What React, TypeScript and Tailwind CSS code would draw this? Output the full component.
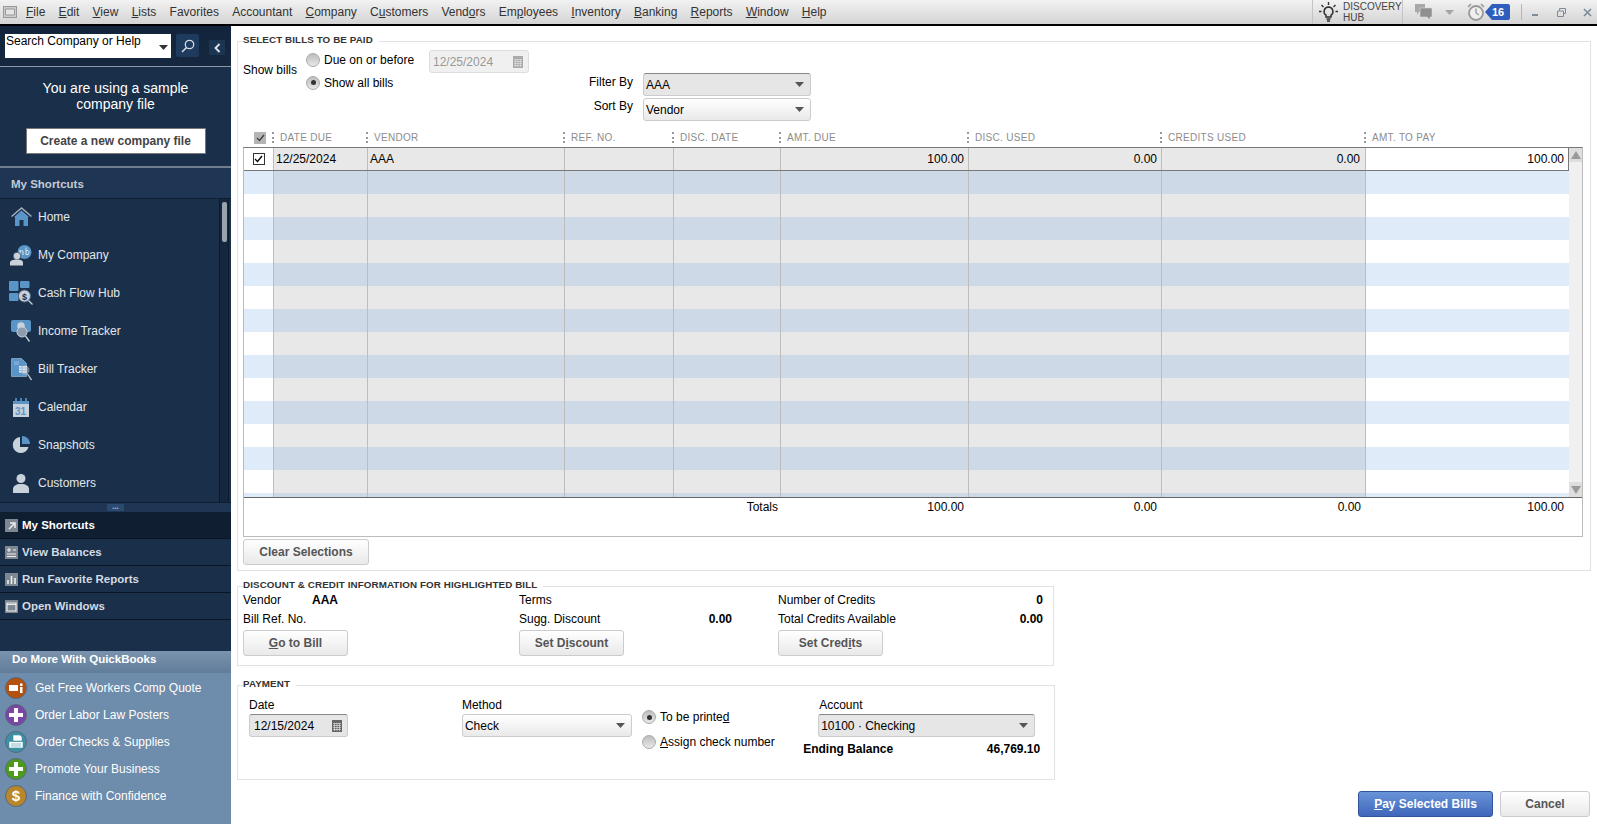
import React from 'react';

const gridCols = 'grid grid-cols-[30px_94px_197px_109px_107px_188px_193px_204px_203px]';

const columns = ['DATE DUE', 'VENDOR', 'REF. NO.', 'DISC. DATE', 'AMT. DUE', 'DISC. USED', 'CREDITS USED', 'AMT. TO PAY'];

function Caret({ className = '' }: { className?: string }) {
  return (
    <svg width="9" height="5" viewBox="0 0 9 5" className={className}>
      <path d="M0 0h9L4.500 5z" fill="currentColor" />
    </svg>
  );
}

function CalendarIcon({ color = '#777' }: { color?: string }) {
  return (
    <svg width="10" height="12" viewBox="0 0 10 12">
      <rect width="10" height="12" fill={color} />
      <path d="M1 3.500h8M1 5.500h8M1 7.500h8M1 9.500h8M2.500 3v8M5 3v8M7.500 3v8" stroke="#ddd" strokeWidth="0.7" />
    </svg>
  );
}

function Radio({ checked = false }: { checked?: boolean }) {
  return (
    <span className="flex h-[14px] w-[14px] shrink-0 items-center justify-center rounded-full border border-[#aaa] bg-gradient-to-b from-[#bdbdbd] to-[#e8e8e8]">
      {checked && <span className="h-[5px] w-[5px] rounded-full bg-[#333]" />}
    </span>
  );
}

function Btn({ children, className = '' }: { children: React.ReactNode; className?: string }) {
  return (
    <button className={`flex h-[26px] items-center justify-center rounded-[3px] border border-[#ccc] bg-gradient-to-b from-white to-[#e9e9e9] text-[12px] font-bold text-[#555] ${className}`}>
      {children}
    </button>
  );
}

function Combo({ value, dark = false, className = '' }: { value: string; dark?: boolean; className?: string }) {
  return (
    <div
      className={`flex h-[23px] items-center justify-between rounded-[3px] border border-[#ccc] pl-[2px] pr-[6px] text-[12px] text-black ${
        dark ? 'border-t-[#888] bg-[#e6e6e6]' : 'bg-gradient-to-b from-white to-[#e9e9e9]'
      } ${className}`}
    >
      <span>{value}</span>
      <Caret className="text-[#555]" />
    </div>
  );
}

function Section({ title, className = '', children }: { title: string; className?: string; children: React.ReactNode }) {
  return (
    <div className={`relative border border-[#e2e2e2] ${className}`}>
      <span className="absolute -top-[8px] left-[5px] bg-white pr-[6px] text-[9.800px] leading-[12px] font-bold tracking-[0.1px] text-[#333]">
        {title}
      </span>
      {children}
    </div>
  );
}

const iconBase = '#5b94c6';
const iconLight = '#c9d1da';

const navItems: { label: string; icon: React.ReactNode }[] = [
  {
    label: 'Home',
    icon: (
      <svg width="21" height="20" viewBox="0 0 21 20">
        <path d="M.500 9.500 10.500 1l10 8.500" fill="none" stroke="#a3b0bd" strokeWidth="1.500" />
        <path d="M3 10 10.500 3.500 18 10h-1v9h-4.500v-6h-4v6H4v-9z" fill={iconBase} />
      </svg>
    ),
  },
  {
    label: 'My Company',
    icon: (
      <svg width="22" height="21" viewBox="0 0 22 21">
        <circle cx="14.500" cy="7" r="7" fill={iconBase} />
        <path d="M10 5v5M10 6.500q3-2 3 0.500V10M16 2.500V9.500q3 1 3-2t-3-1.500" stroke="#dbe6f0" strokeWidth="1" fill="none" />
        <circle cx="7" cy="11" r="3.800" fill={iconLight} stroke="#1a2f4a" strokeWidth="0.600" />
        <path d="M0 20.500v-3C0 15.500 3 14.500 7 14.500s6 1 6 3v3z" fill={iconLight} />
      </svg>
    ),
  },
  {
    label: 'Cash Flow Hub',
    icon: (
      <svg width="24" height="24" viewBox="0 0 24 24">
        <rect x="0" y="0" width="9.500" height="10" rx="1" fill={iconBase} />
        <rect x="11" y="0" width="9.500" height="7" rx="1" fill={iconBase} />
        <rect x="0" y="12" width="9.500" height="8" rx="1" fill={iconBase} />
        <circle cx="15.500" cy="15" r="6" fill={iconLight} stroke="#4d6781" strokeWidth="1" />
        <text x="13" y="18.500" fontSize="9" fontWeight="700" fill="#1a2f4a" fontFamily="Liberation Sans, sans-serif">$</text>
        <path d="m19.500 19.500 4 4" stroke={iconLight} strokeWidth="1.300" />
      </svg>
    ),
  },
  {
    label: 'Income Tracker',
    icon: (
      <svg width="20" height="22" viewBox="0 0 20 22">
        <path d="M2 0h16a2 2 0 0 1 2 2v8a2 2 0 0 1-2 2H2a2 2 0 0 1-2-2V2a2 2 0 0 1 2-2z" fill={iconBase} />
        <circle cx="10" cy="6" r="3.800" fill={iconLight} />
        <circle cx="11" cy="12" r="5" fill="#8d9dad" stroke={iconLight} strokeWidth="1" />
        <path d="m14.500 16 4 5.500" stroke={iconLight} strokeWidth="1.300" />
      </svg>
    ),
  },
  {
    label: 'Bill Tracker',
    icon: (
      <svg width="21" height="23" viewBox="0 0 21 23">
        <path d="M.500.500h10l5 5v13H.500z" fill={iconBase} stroke="#a9c7e0" strokeWidth="0.600" />
        <path d="M3 4h5M3 6h5" stroke="#a9c7e0" strokeWidth="0.800" />
        <rect x="8" y="8" width="8" height="6.500" fill="#e5edf4" />
        <path d="M8 10h8M8 12.500h8M11 8v6.500" stroke={iconBase} strokeWidth="0.700" />
        <circle cx="14" cy="12" r="4.500" fill="#c9d1da" fillOpacity="0.500" />
        <path d="m16.500 16 4 6" stroke={iconLight} strokeWidth="1.300" />
      </svg>
    ),
  },
  {
    label: 'Calendar',
    icon: (
      <svg width="16" height="19" viewBox="0 0 16 19">
        <rect x="0" y="3" width="16" height="16" fill={iconLight} />
        <rect x="0" y="3" width="16" height="3" fill={iconBase} />
        <path d="M3 0v5M8 0v5M13 0v5" stroke={iconBase} strokeWidth="1.600" />
        <text x="2" y="17" fontSize="10" fontWeight="700" fill={iconBase} fontFamily="Liberation Sans, sans-serif">31</text>
      </svg>
    ),
  },
  {
    label: 'Snapshots',
    icon: (
      <svg width="18" height="18" viewBox="0 0 18 18">
        <path d="M8 1a8 8 0 1 0 8.500 10H8z" fill={iconLight} />
        <path d="M10 0a8 8 0 0 1 8 8h-8z" fill={iconBase} />
      </svg>
    ),
  },
  {
    label: 'Customers',
    icon: (
      <svg width="16" height="19" viewBox="0 0 16 19">
        <circle cx="8" cy="4.500" r="4.500" fill={iconLight} />
        <path d="M0 19v-4c0-3 3-5 8-5s8 2 8 5v4z" fill={iconLight} />
      </svg>
    ),
  },
];

const groupIcons: Record<string, React.ReactNode> = {
  'My Shortcuts': <path d="M4 10 9 5M5 4h5v5" stroke="#eee" strokeWidth="1.500" fill="none" />,
  'View Balances': <path d="M2 4h4M4 2v4M8 4h3M2 8h9M2 10.500h9" stroke="#eee" strokeWidth="1.100" fill="none" />,
  'Run Favorite Reports': <path d="M3 11V7M6.500 11V3M10 11V5" stroke="#eee" strokeWidth="1.600" fill="none" />,
  'Open Windows': <path d="M2 3h9v8H2zM2 4.500h9" stroke="#eee" strokeWidth="1.200" fill="none" />,
};

const promos = [
  {
    label: 'Get Free Workers Comp Quote',
    bg: 'bg-[#b5500f]',
    icon: <path d="M4 8h9v6H4zM15 6.500h2.500V9H15zM15 10h2.500v6H15z" fill="#fff" />,
  },
  { label: 'Order Labor Law Posters', bg: 'bg-[#7a45a3]', icon: <path d="M9 4h4v5h5v4h-5v5H9v-5H4V9h5z" fill="#fff" /> },
  {
    label: 'Order Checks & Supplies',
    bg: 'bg-[#3d8fa3]',
    icon: <path d="M8 4h7l2 2v4H8zM4 10.500h14V17H4zM6 13h10M6 15h10" fill="#fff" stroke="#3d8fa3" strokeWidth="0.600" />,
  },
  { label: 'Promote Your Business', bg: 'bg-[#4f9a1b]', icon: <path d="M9 4h4v5h5v4h-5v5H9v-5H4V9h5z" fill="#fff" /> },
  { label: 'Finance with Confidence', bg: 'bg-[#b8862b]', icon: null },
];

function MenuBar() {
  return (
    <div className="flex h-[26px] shrink-0 items-center border-b-2 border-black bg-gradient-to-b from-[#f2f2f2] to-[#d4d4d4] text-[12px] text-[#333]">
      <svg width="14" height="12" viewBox="0 0 14 12" className="mr-[9px] ml-[3px]">
        <rect x="0.500" y="0.500" width="13" height="11" fill="#ccc" stroke="#999" />
        <path d="M2.500 3h9v6h-9z" fill="#e5e5e5" stroke="#999" />
      </svg>
      <nav className="flex gap-[13.250px]">
        <span><u>F</u>ile</span>
        <span><u>E</u>dit</span>
        <span><u>V</u>iew</span>
        <span><u>L</u>ists</span>
        <span>Favorites</span>
        <span>Accountant</span>
        <span><u>C</u>ompany</span>
        <span>C<u>u</u>stomers</span>
        <span>Vend<u>o</u>rs</span>
        <span>Em<u>p</u>loyees</span>
        <span><u>I</u>nventory</span>
        <span><u>B</u>anking</span>
        <span><u>R</u>eports</span>
        <span><u>W</u>indow</span>
        <span><u>H</u>elp</span>
      </nav>
      <div className="ml-auto flex h-full items-center">
        <div className="flex h-full w-[91px] items-center border-x border-[#c4c4c4] pl-[6px]">
          <svg width="19" height="20" viewBox="0 0 19 20" className="shrink-0">
            <path d="M9.500 5a4.500 4.500 0 0 0-2.500 8.200V15h5v-1.800A4.500 4.500 0 0 0 9.500 5z" fill="none" stroke="#333" strokeWidth="1.500" />
            <path d="M7.500 17h4M8 19h3M9.500 0v3M2.500 3l2 2M16.500 3l-2 2M0 9.500h2.500M19 9.500h-2.500" stroke="#333" strokeWidth="1.400" />
          </svg>
          <div className="ml-[5px] text-[10px] leading-[11px] text-[#444]">
            DISCOVERY
            <br />
            HUB
          </div>
        </div>
        <svg width="17" height="16" viewBox="0 0 17 16" className="ml-[12px]">
          <path d="M0 0h10v8H4l-2 3V8H0z" fill="#a8a8a8" />
          <path d="M5 4h12v9h-2v3l-3-3H5z" fill="#8f8f8f" stroke="#ddd" strokeWidth="0.600" />
        </svg>
        <Caret className="ml-[13px] text-[#a5a5a5]" />
        <svg width="18" height="18" viewBox="0 0 18 18" className="ml-[13px]">
          <circle cx="9" cy="10" r="7" fill="#eee" stroke="#999" strokeWidth="1.800" />
          <path d="M9 5.500V10l3 2" stroke="#999" strokeWidth="1.300" fill="none" />
          <path d="M1 4 4 1M17 4l-3-3" stroke="#999" strokeWidth="1.600" />
        </svg>
        <div className="flex items-center">
          <span className="h-0 w-0 border-y-[8px] border-r-[7px] border-y-transparent border-r-[#2f5dbd]" />
          <span className="flex h-[16px] w-[18px] items-center rounded-r-[2px] bg-[#2f5dbd] text-[11px] font-bold text-white">16</span>
        </div>
        <span className="ml-[11px] h-[16px] w-px bg-[#b5b5b5]" />
        <span className="ml-[10px] mt-[6px] h-[2px] w-[6px] bg-[#7c8a99]" />
        <svg width="9" height="9" viewBox="0 0 9 9" className="ml-[19px]">
          <path d="M2.500 2.500v-2h6v5h-2M.5 3h6v5.500h-6z" fill="none" stroke="#7c8a99" strokeWidth="1" />
        </svg>
        <svg width="9" height="9" viewBox="0 0 9 9" className="ml-[17px] mr-[5px]">
          <path d="m1 1 7 7M8 1 1 8" stroke="#7c8a99" strokeWidth="1.600" />
        </svg>
      </div>
    </div>
  );
}

function Sidebar() {
  return (
    <aside className="flex h-full w-[231px] shrink-0 flex-col bg-[#1a2f4a] text-[#e3e7ec]">
      <div className="flex h-[41px] shrink-0 items-start border-b border-[#8d98a5] bg-gradient-to-b from-[#12243b] to-[#15283f] pt-[8px] pl-[5px]">
        <div className="flex h-[24px] w-[166px] justify-between bg-white pl-px pr-[3px] text-[12px] leading-[15px] text-black">
          <span>Search Company or Help</span>
          <Caret className="mt-[11px] text-[#333]" />
        </div>
        <div className="ml-[5px] flex h-[23px] w-[23px] items-center justify-center rounded-[2px] bg-[#1e3a5c]">
          <svg width="14" height="14" viewBox="0 0 14 14">
            <circle cx="8.500" cy="5.500" r="4.200" fill="none" stroke="#d5dbe2" strokeWidth="1.300" />
            <path d="M5.500 8.500 1 13" stroke="#d5dbe2" strokeWidth="1.600" />
          </svg>
        </div>
        <div className="mt-[6px] ml-[10px] flex h-[15px] w-[16px] items-center justify-center bg-[#1c3553]">
          <svg width="7" height="10" viewBox="0 0 7 10">
            <path d="M5.500 1 1.500 5l4 4" fill="none" stroke="#e4e8ec" strokeWidth="1.800" />
          </svg>
        </div>
      </div>
      <div className="flex h-[101px] shrink-0 flex-col items-center border-b-2 border-[#6f7d8d] pt-[13px]">
        <p className="text-center text-[14px] leading-[16px] text-white">
          You are using a sample
          <br />
          company file
        </p>
        <button className="mt-[16px] h-[26px] w-[180px] border border-[#777] bg-white text-[12px] font-bold text-[#444]">
          Create a new company file
        </button>
      </div>
      <div className="flex h-[31px] shrink-0 items-center border-b border-[#0e1d2f] bg-[#1e3554] pt-[3px] pl-[11px] text-[11.500px] font-bold text-[#c3cbd4]">
        My Shortcuts
      </div>
      <div className="flex h-[303px] shrink-0 overflow-hidden">
        <ul className="-mt-px flex-1">
          {navItems.map((item) => (
            <li key={item.label} className="flex h-[38px] items-center text-[12px]">
              <span className="flex w-[38px] shrink-0 items-center justify-center pl-[4px]">{item.icon}</span>
              {item.label}
            </li>
          ))}
        </ul>
        <div className="mr-[2px] w-[10px] border-x border-[#0c1a2a] bg-[#14273e] pt-[3px]">
          <div className="mx-auto h-[40px] w-[5px] rounded-[2px] bg-[#9aa3ad]" />
        </div>
      </div>
      <div className="flex h-[10px] shrink-0 items-center justify-center border-t border-[#0e1d2f] bg-[#1e3554]">
        <span className="flex h-[7px] w-[17px] items-center justify-center bg-[#2a4a70] text-[6px] leading-none text-[#9fb0c2]">•••</span>
      </div>
      <div className="shrink-0">
        {Object.keys(groupIcons).map((g, i) => (
          <div
            key={g}
            className={`flex h-[27px] items-center gap-[4px] border-b border-[#0a1625] pt-px pl-[5px] text-[11.500px] font-bold ${
              i === 0 ? 'bg-[#0f1e30] text-white' : 'text-[#d5dbe2]'
            }`}
          >
            <svg width="13" height="13" viewBox="0 0 13 13">
              <rect width="13" height="13" fill="#7d8791" />
              {groupIcons[g]}
            </svg>
            {g}
          </div>
        ))}
      </div>
      <div className="flex-1" />
      <div className="h-[173px] shrink-0 bg-[#6e8cab]">
        <div className="h-[22px] bg-gradient-to-b from-[#7a93ae] to-[#627d9a] pl-[12px] pt-[1px] text-[11.500px] leading-[14px] font-bold text-white">
          Do More With QuickBooks
        </div>
        <ul className="pt-[1px]">
          {promos.map((p) => (
            <li key={p.label} className="flex h-[27px] items-center text-[12px] text-white">
              <span className={`ml-[5px] flex h-[22px] w-[22px] shrink-0 items-center justify-center rounded-full border border-[#56697d] ${p.bg}`}>
                {p.icon ? (
                  <svg width="22" height="22" viewBox="0 0 22 22" className="shrink-0">{p.icon}</svg>
                ) : (
                  <span className="text-[15px] leading-none font-bold">$</span>
                )}
              </span>
              <span className="ml-[8px]">{p.label}</span>
            </li>
          ))}
        </ul>
      </div>
    </aside>
  );
}

function BillsTable() {
  const rows = Array.from({ length: 15 }, (_, i) => i);
  const cell = 'border-r border-[#bdbdbd] h-full';
  return (
    <div className="ml-[5px] mr-[7px] flex h-[390px] flex-col border border-[#bbb] border-t-[#777]">
      <div className="flex h-[349px] overflow-hidden">
        <div className="w-[1325px] shrink-0">
          <div className={`${gridCols} h-[23px] border-b border-[#777] bg-[#e8e8e8] text-[12px] leading-[22px] text-black`}>
            <div className="flex items-center justify-center border-r border-[#bdbdbd] bg-white">
              <span className="flex h-[12px] w-[12px] items-center justify-center border border-[#333] bg-white">
                <svg width="9" height="8" viewBox="0 0 9 8"><path d="m1 4 2.500 2.500L8 1" fill="none" stroke="#000" strokeWidth="1.300" /></svg>
              </span>
            </div>
            <div className={`${cell} pl-[2px]`}>12/25/2024</div>
            <div className={`${cell} pl-[2px]`}>AAA</div>
            <div className={cell} />
            <div className={cell} />
            <div className={`${cell} pr-[4px] text-right`}>100.00</div>
            <div className={`${cell} pr-[4px] text-right`}>0.00</div>
            <div className={`${cell} pr-[5px] text-right`}>0.00</div>
            <div className="border-r border-[#777] bg-white pr-[4px] text-right">100.00</div>
          </div>
          {rows.map((r) => {
            const even = r % 2 === 0;
            const mid = even ? 'bg-[#ced9e7]' : 'bg-[#e8e8e8]';
            const edge = even ? 'bg-[#e0ebfa]' : 'bg-white';
            return (
              <div key={r} className={`${gridCols} h-[23px]`}>
                <div className={`${cell} ${edge}`} />
                <div className={`${cell} ${mid}`} />
                <div className={`${cell} ${mid}`} />
                <div className={`${cell} ${mid}`} />
                <div className={`${cell} ${mid}`} />
                <div className={`${cell} ${mid}`} />
                <div className={`${cell} ${mid}`} />
                <div className={`${cell} ${mid}`} />
                <div className={edge} />
              </div>
            );
          })}
        </div>
        <div className="flex flex-1 flex-col justify-between bg-[#f0f0f0]">
          <div className="flex h-[14px] items-center justify-center bg-[#dedede]">
            <svg width="10" height="8" viewBox="0 0 10 8"><path d="M5 0l5 8H0z" fill="#9a9a9a" /></svg>
          </div>
          <div className="flex h-[15px] items-center justify-center bg-[#dedede]">
            <svg width="10" height="8" viewBox="0 0 10 8"><path d="M0 0h10L5 8z" fill="#9a9a9a" /></svg>
          </div>
        </div>
      </div>
      <div className={`${gridCols} flex-1 border-t border-[#666] pt-px text-[12px] leading-[16px] text-black`}>
        <div className="col-span-5 pr-[3px] text-right">Totals</div>
        <div className="pr-[5px] text-right">100.00</div>
        <div className="pr-[5px] text-right">0.00</div>
        <div className="pr-[5px] text-right">0.00</div>
        <div className="pr-[5px] text-right">100.00</div>
      </div>
    </div>
  );
}

function SelectBills() {
  return (
    <Section title="SELECT BILLS TO BE PAID" className="ml-[6px] h-[530px] w-[1354px]">
      <div className="flex h-[87px] pl-[5px] text-[12px] text-black">
        <div className="w-[63px] pt-[21px] leading-[14px]">Show bills</div>
        <div className="w-[123px] pt-[6px]">
          <label className="flex h-[23px] items-center gap-[4px]">
            <Radio />
            <span>Due on or before</span>
          </label>
          <label className="flex h-[23px] items-center gap-[4px]">
            <Radio checked />
            <span>Show all bills</span>
          </label>
        </div>
        <div className="mt-[8px] flex h-[23px] w-[100px] items-center justify-between rounded-[3px] border border-[#ddd] bg-[#f0f0f0] pr-[5px] pl-[3px] text-[#999]">
          12/25/2024
          <CalendarIcon color="#aaa" />
        </div>
        <div className="mt-[31px] ml-[45px]">
          <div className="flex h-[25px] items-start gap-[10px]">
            <span className="w-[59px] pt-px text-right leading-[17px]">Filter By</span>
            <Combo value="AAA" dark className="w-[168px]" />
          </div>
          <div className="flex items-start gap-[10px]">
            <span className="w-[59px] text-right leading-[17px]">Sort By</span>
            <Combo value="Vendor" className="w-[168px]" />
          </div>
        </div>
      </div>
      <div className={`${gridCols} h-[18px] items-start pl-[5px] text-[10px] leading-[17px] tracking-[0.3px] text-[#8c8c8c]`}>
        <div className="flex h-[17px] items-center justify-end pr-[7px]">
          <span className="flex h-[12px] w-[12px] items-center justify-center bg-[#b5b5b5]">
            <svg width="9" height="8" viewBox="0 0 9 8"><path d="m1 4 2.500 2.500L8 1" fill="none" stroke="#444" strokeWidth="1.500" /></svg>
          </span>
        </div>
        {columns.map((c) => (
          <div key={c} className="flex h-[17px] items-center">
            <span className="mr-[6px] -ml-px h-[11px] border-l-2 border-dotted border-[#999]" />
            {c}
          </div>
        ))}
      </div>
      <BillsTable />
      <Btn className="mt-[2px] ml-[5px] w-[126px]">Clear Selections</Btn>
    </Section>
  );
}

function DiscountInfo() {
  return (
    <Section title="DISCOUNT & CREDIT INFORMATION FOR HIGHLIGHTED BILL" className="mt-[15px] ml-[6px] h-[80px] w-[817px]">
      <div className="grid grid-cols-[276px_259px_1fr] pt-[5px] pl-[5px] text-[12px] leading-[16px] text-black">
        <div>
          <div className="flex h-[19px]">
            <span className="w-[69px]">Vendor</span>
            <span className="font-bold">AAA</span>
          </div>
          <div className="h-[19px]">Bill Ref. No.</div>
          <Btn className="w-[105px]"><u>G</u>o to Bill</Btn>
        </div>
        <div>
          <div className="h-[19px]">Terms</div>
          <div className="flex h-[19px] w-[213px] justify-between">
            <span>Sugg. Discount</span>
            <span className="font-bold">0.00</span>
          </div>
          <Btn className="w-[105px]">Set D<u>i</u>scount</Btn>
        </div>
        <div>
          <div className="flex h-[19px] w-[265px] justify-between">
            <span>Number of Credits</span>
            <span className="font-bold">0</span>
          </div>
          <div className="flex h-[19px] w-[265px] justify-between">
            <span>Total Credits Available</span>
            <span className="font-bold">0.00</span>
          </div>
          <Btn className="w-[105px]">Set Cred<u>i</u>ts</Btn>
        </div>
      </div>
    </Section>
  );
}

function Payment() {
  return (
    <Section title="PAYMENT" className="mt-[19px] ml-[6px] h-[95px] w-[818px]">
      <div className="flex pt-[11px] pl-[11px] text-[12px] leading-[16px] text-black">
        <div className="w-[214px]">
          <div className="h-[17px]">Date</div>
          <div className="flex h-[23px] w-[99px] items-center justify-between rounded-[3px] border border-[#ccc] border-t-[#888] bg-[#e6e6e6] pr-[5px] pl-[4px]">
            12/15/2024
            <CalendarIcon color="#666" />
          </div>
        </div>
        <div className="w-[181px]">
          <div className="h-[17px]">Method</div>
          <Combo value="Check" className="w-[170px]" />
        </div>
        <div className="w-[177px] pt-[8px]">
          <label className="flex h-[24px] items-center gap-[4px]">
            <Radio checked />
            <span>To be printe<u>d</u></span>
          </label>
          <label className="flex h-[25px] items-center gap-[4px]">
            <Radio />
            <span><u>A</u>ssign check number</span>
          </label>
        </div>
        <div className="w-[237px]">
          <div className="h-[17px] pl-[1px]">Account</div>
          <Combo value="10100 · Checking" dark className="w-[217px]" />
          <div className="-ml-[15px] mt-[4px] flex w-[237px] justify-between font-bold">
            <span>Ending Balance</span>
            <span>46,769.10</span>
          </div>
        </div>
      </div>
    </Section>
  );
}

export default function App() {
  return (
    <div className="flex h-screen w-full flex-col overflow-hidden bg-white font-['Liberation_Sans',sans-serif]">
      <MenuBar />
      <div className="flex min-h-0 flex-1">
        <Sidebar />
        <main className="flex-1 pt-[15px]">
          <SelectBills />
          <DiscountInfo />
          <Payment />
          <div className="mt-[11px] mr-[7px] flex justify-end gap-[7px]">
            <button className="h-[26px] w-[135px] rounded-[3px] border border-[#30559a] bg-gradient-to-b from-[#6a94d8] to-[#3f66ba] text-[12px] font-bold text-white">
              <u>P</u>ay Selected Bills
            </button>
            <Btn className="w-[90px]">Cancel</Btn>
          </div>
        </main>
      </div>
    </div>
  );
}
